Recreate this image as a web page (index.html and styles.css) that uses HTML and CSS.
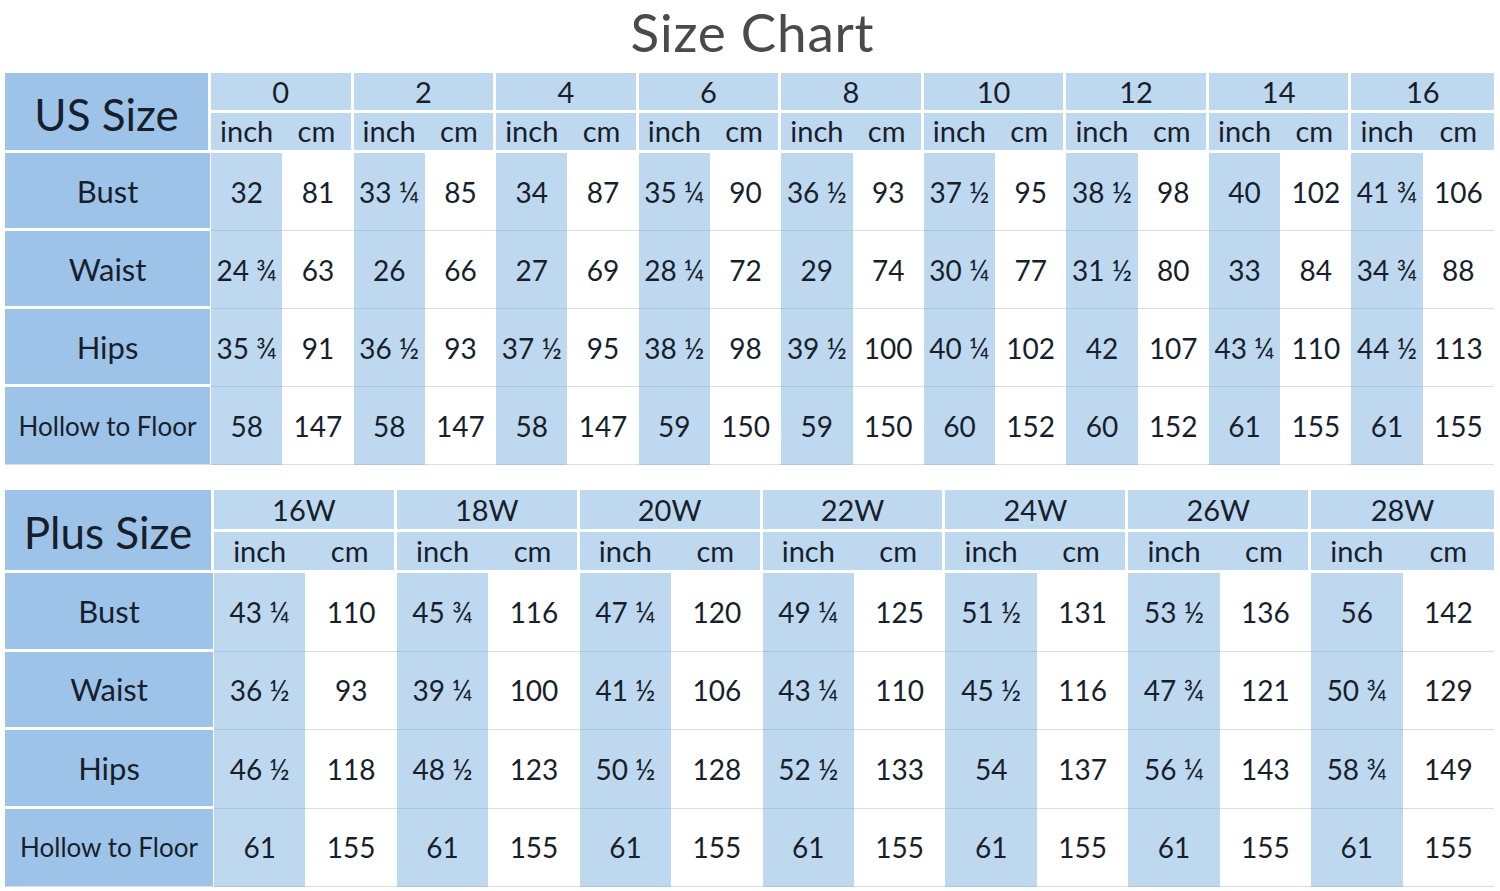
FILE: index.html
```html
<!DOCTYPE html>
<html>
<head>
<meta charset="utf-8">
<link rel="stylesheet" href="styles.css">
</head>
<body>
<div class="page">
  <h1 class="title">Size Chart</h1>

  <div class="chart us">
    <div class="corner">US Size</div>
    <div class="size">0</div><div class="size">2</div><div class="size">4</div><div class="size">6</div><div class="size">8</div><div class="size">10</div><div class="size">12</div><div class="size">14</div><div class="size last">16</div>
    <div class="unit">inch</div><div class="unit cmh">cm</div>
    <div class="unit">inch</div><div class="unit cmh">cm</div>
    <div class="unit">inch</div><div class="unit cmh">cm</div>
    <div class="unit">inch</div><div class="unit cmh">cm</div>
    <div class="unit">inch</div><div class="unit cmh">cm</div>
    <div class="unit">inch</div><div class="unit cmh">cm</div>
    <div class="unit">inch</div><div class="unit cmh">cm</div>
    <div class="unit">inch</div><div class="unit cmh">cm</div>
    <div class="unit">inch</div><div class="unit cmh last">cm</div>

    <div class="lbl">Bust</div>
    <div class="in">32</div><div class="cm">81</div>
    <div class="in">33 ¼</div><div class="cm">85</div>
    <div class="in">34</div><div class="cm">87</div>
    <div class="in">35 ¼</div><div class="cm">90</div>
    <div class="in">36 ½</div><div class="cm">93</div>
    <div class="in">37 ½</div><div class="cm">95</div>
    <div class="in">38 ½</div><div class="cm">98</div>
    <div class="in">40</div><div class="cm">102</div>
    <div class="in">41 ¾</div><div class="cm">106</div>

    <div class="lbl">Waist</div>
    <div class="in">24 ¾</div><div class="cm">63</div>
    <div class="in">26</div><div class="cm">66</div>
    <div class="in">27</div><div class="cm">69</div>
    <div class="in">28 ¼</div><div class="cm">72</div>
    <div class="in">29</div><div class="cm">74</div>
    <div class="in">30 ¼</div><div class="cm">77</div>
    <div class="in">31 ½</div><div class="cm">80</div>
    <div class="in">33</div><div class="cm">84</div>
    <div class="in">34 ¾</div><div class="cm">88</div>

    <div class="lbl">Hips</div>
    <div class="in">35 ¾</div><div class="cm">91</div>
    <div class="in">36 ½</div><div class="cm">93</div>
    <div class="in">37 ½</div><div class="cm">95</div>
    <div class="in">38 ½</div><div class="cm">98</div>
    <div class="in">39 ½</div><div class="cm">100</div>
    <div class="in">40 ¼</div><div class="cm">102</div>
    <div class="in">42</div><div class="cm">107</div>
    <div class="in">43 ¼</div><div class="cm">110</div>
    <div class="in">44 ½</div><div class="cm">113</div>

    <div class="lbl small lastrow">Hollow to Floor</div>
    <div class="in lastrow">58</div><div class="cm lastrow">147</div>
    <div class="in lastrow">58</div><div class="cm lastrow">147</div>
    <div class="in lastrow">58</div><div class="cm lastrow">147</div>
    <div class="in lastrow">59</div><div class="cm lastrow">150</div>
    <div class="in lastrow">59</div><div class="cm lastrow">150</div>
    <div class="in lastrow">60</div><div class="cm lastrow">152</div>
    <div class="in lastrow">60</div><div class="cm lastrow">152</div>
    <div class="in lastrow">61</div><div class="cm lastrow">155</div>
    <div class="in lastrow">61</div><div class="cm lastrow">155</div>
  </div>

  <div class="chart plus">
    <div class="corner">Plus Size</div>
    <div class="size">16W</div><div class="size">18W</div><div class="size">20W</div><div class="size">22W</div><div class="size">24W</div><div class="size">26W</div><div class="size last">28W</div>
    <div class="unit">inch</div><div class="unit cmh">cm</div>
    <div class="unit">inch</div><div class="unit cmh">cm</div>
    <div class="unit">inch</div><div class="unit cmh">cm</div>
    <div class="unit">inch</div><div class="unit cmh">cm</div>
    <div class="unit">inch</div><div class="unit cmh">cm</div>
    <div class="unit">inch</div><div class="unit cmh">cm</div>
    <div class="unit">inch</div><div class="unit cmh last">cm</div>

    <div class="lbl">Bust</div>
    <div class="in">43 ¼</div><div class="cm">110</div>
    <div class="in">45 ¾</div><div class="cm">116</div>
    <div class="in">47 ¼</div><div class="cm">120</div>
    <div class="in">49 ¼</div><div class="cm">125</div>
    <div class="in">51 ½</div><div class="cm">131</div>
    <div class="in">53 ½</div><div class="cm">136</div>
    <div class="in">56</div><div class="cm">142</div>

    <div class="lbl">Waist</div>
    <div class="in">36 ½</div><div class="cm">93</div>
    <div class="in">39 ¼</div><div class="cm">100</div>
    <div class="in">41 ½</div><div class="cm">106</div>
    <div class="in">43 ¼</div><div class="cm">110</div>
    <div class="in">45 ½</div><div class="cm">116</div>
    <div class="in">47 ¾</div><div class="cm">121</div>
    <div class="in">50 ¾</div><div class="cm">129</div>

    <div class="lbl">Hips</div>
    <div class="in">46 ½</div><div class="cm">118</div>
    <div class="in">48 ½</div><div class="cm">123</div>
    <div class="in">50 ½</div><div class="cm">128</div>
    <div class="in">52 ½</div><div class="cm">133</div>
    <div class="in">54</div><div class="cm">137</div>
    <div class="in">56 ¼</div><div class="cm">143</div>
    <div class="in">58 ¾</div><div class="cm">149</div>

    <div class="lbl small lastrow">Hollow to Floor</div>
    <div class="in lastrow">61</div><div class="cm lastrow">155</div>
    <div class="in lastrow">61</div><div class="cm lastrow">155</div>
    <div class="in lastrow">61</div><div class="cm lastrow">155</div>
    <div class="in lastrow">61</div><div class="cm lastrow">155</div>
    <div class="in lastrow">61</div><div class="cm lastrow">155</div>
    <div class="in lastrow">61</div><div class="cm lastrow">155</div>
    <div class="in lastrow">61</div><div class="cm lastrow">155</div>
  </div>
</div>
</body>
</html>
```

FILE: styles.css
```css
html, body {
  margin: 0;
  padding: 0;
  background: #ffffff;
}

.page {
  width: 1489px;
  padding-left: 5px;
  font-family: Lato, "Open Sans", "DejaVu Sans", sans-serif;
  color: #181f2c;
}

.title {
  margin: 0;
  height: 73px;
  line-height: 64px;
  text-align: center;
  font-size: 53px;
  font-weight: 400;
  color: #4a4a4c;
  letter-spacing: 0.8px;
  padding-left: 6px;
  box-sizing: border-box;
}

.chart {
  display: grid;
  box-sizing: border-box;
}

.chart > div {
  display: flex;
  align-items: center;
  justify-content: center;
  box-sizing: border-box;
  white-space: nowrap;
}

.us {
  grid-template-columns: 206px repeat(18, 1fr);
  grid-template-rows: 40px 40px repeat(4, 78px);
}

.plus {
  margin-top: 25px;
  grid-template-columns: 209px repeat(14, 1fr);
  grid-template-rows: 42px 41px repeat(4, 78.5px);
}

.corner {
  grid-row: span 2;
  background: #9ec3e8;
  border-right: 3px solid #ffffff;
  border-bottom: 3px solid #ffffff;
  font-size: 44px;
  padding-top: 4px;
}

.size {
  grid-column: span 2;
  background: #bed8ef;
  border-right: 3px solid #ffffff;
  border-bottom: 3px solid #ffffff;
  font-size: 29px;
}

.unit {
  background: #bed8ef;
  border-bottom: 3px solid #ffffff;
  font-size: 29px;
  padding-bottom: 2px;
}

.cmh {
  border-right: 3px solid #ffffff;
}

.size.last,
.cmh.last {
  border-right: none;
}

.lbl {
  background: #9ec3e8;
  border-right: 1px solid #ffffff;
  border-bottom: 3px solid #ffffff;
  font-size: 31px;
}

.lbl.small {
  font-size: 26px;
}

.in {
  background: #bed8ef;
  border-bottom: 1px solid #aec6dd;
  font-size: 28px;
}

.cm {
  background: #ffffff;
  border-bottom: 1px solid #dcdcdc;
  font-size: 28px;
}

.lbl.lastrow {
  border-bottom: 1px solid #dcdcdc;
}
```
